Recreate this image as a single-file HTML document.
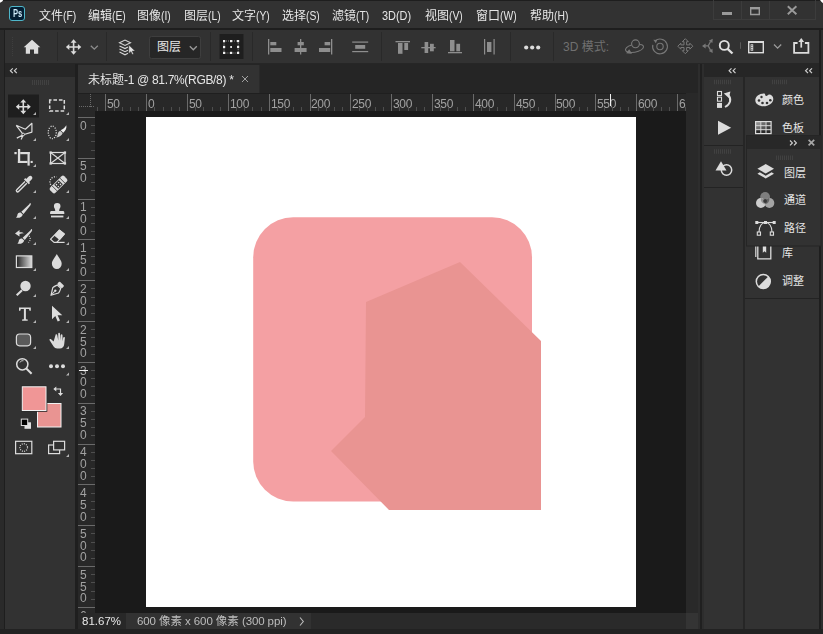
<!DOCTYPE html>
<html lang="zh"><head><meta charset="utf-8"><title>Photoshop</title>
<style>
*{box-sizing:border-box}
html,body{margin:0;padding:0}
body{width:823px;height:634px;position:relative;overflow:hidden;background:#262626;font-family:"Liberation Sans","Noto Sans CJK SC",sans-serif;font-size:12px;color:#e0e0e0}
.a{position:absolute}
.cjt{letter-spacing:0}
#menubar{left:0;top:0;width:823px;height:28px;background:#323232;border-top:1px solid #1e1e1e}
.mi{position:absolute;top:8.5px;height:14px;line-height:14px;font-size:12px;color:#e6e6e6;white-space:nowrap}
.ml{display:inline-block;transform:scaleX(.86);transform-origin:0 50%;font-size:12px}
.mi,.st,#tabtxt,.rl,.vl,.g{will-change:transform}
#optbar{left:5px;top:30px;width:814px;height:33px;background:#323232}
#toolhdr{left:5px;top:65px;width:70px;height:12px;background:#262626}
#tools{left:5px;top:77px;width:70px;height:552px;background:#323232}
#tabbar{left:78px;top:64px;width:620px;height:29px;background:#252525}
#tab{left:78px;top:65px;width:182px;height:28px;background:#323232;border-right:1px solid #2a2a2a}
#tabtxt{left:88px;top:72.5px;height:14px;line-height:14px;font-size:12px;color:#e6e6e6;white-space:nowrap;letter-spacing:-0.32px}
#hr{left:78px;top:93px;width:608px;height:18px;background:#282828;overflow:hidden;border-top:1px solid #1f1f1f}
#vr{left:78px;top:111px;width:17px;height:502px;background:#282828;overflow:hidden}
#rsb{left:686px;top:93px;width:12px;height:520px;background:#292929}
#paste{left:95px;top:111px;width:591px;height:502px;background:#1a1a1a}
#canvas{left:146px;top:117px;width:490px;height:490px;background:#fff}
.mt{position:absolute;top:-1px;width:1px;height:18px;background:#6a6a6a}
.nt{position:absolute;top:13px;width:1px;height:4px;background:#4e4e4e}
.rl{position:absolute;top:4px;font-weight:normal;font-size:12px;line-height:12px;color:#a2a2a2;letter-spacing:-0.3px}
.vmt{position:absolute;left:0;height:1px;width:17px;background:#6a6a6a}
.vnt{position:absolute;left:13px;height:1px;width:4px;background:#4e4e4e}
.vl{position:absolute;left:1.5px;font-weight:normal;font-size:12px;line-height:12px;color:#a2a2a2}
#status{left:78px;top:613px;width:608px;height:16px;background:#2a2a2a}
#info{left:126px;top:613px;width:185px;height:16px;background:#323232}
#corner{left:686px;top:613px;width:16px;height:16px;background:#343434}
#zoomf{left:78px;top:613px;width:48px;height:16px;background:#282828}
.st{position:absolute;top:614.2px;height:14px;line-height:14px;font-size:11.5px;white-space:nowrap}
#dock1h{left:704px;top:65px;width:39px;height:12px;background:#262626}
#dock2h{left:745px;top:65px;width:74px;height:12px;background:#262626}
#dock1{left:704px;top:77px;width:39px;height:552px;background:#323232}
#dock2{left:745px;top:77px;width:74px;height:552px;background:#323232}
.pl{position:absolute;font-size:11px;line-height:11px;height:11px;color:#e6e6e6;white-space:nowrap}
</style></head><body>
<div class="a" style="left:0;top:30px;width:5px;height:604px;background:#1e1e1e"></div>
<div class="a" style="left:0px;top:30px;width:4px;height:604px;background:#2a2a2a"></div>
<div class="a" style="left:819px;top:30px;width:4px;height:604px;background:#1e1e1e"></div>
<div class="a" style="left:821px;top:30px;width:2px;height:604px;background:#2e2e2e"></div>
<div class="a" style="left:0;top:629px;width:823px;height:5px;background:#222"></div>
<div id="menubar" class="a"></div>
<div class="a" style="left:0;top:28px;width:823px;height:2px;background:#1e1e1e"></div>
<span class="mi" style="left:39px">文件<span class="ml">(F)</span></span><span class="mi" style="left:88px">编辑<span class="ml">(E)</span></span><span class="mi" style="left:137px">图像<span class="ml">(I)</span></span><span class="mi" style="left:184px">图层<span class="ml">(L)</span></span><span class="mi" style="left:232px">文字<span class="ml">(Y)</span></span><span class="mi" style="left:282px">选择<span class="ml">(S)</span></span><span class="mi" style="left:332px">滤镜<span class="ml">(T)</span></span><span class="mi" style="left:382px"><span class="ml" style="transform:scaleX(.91)">3D(D)</span></span><span class="mi" style="left:425px">视图<span class="ml">(V)</span></span><span class="mi" style="left:476px">窗口<span class="ml">(W)</span></span><span class="mi" style="left:530px">帮助<span class="ml">(H)</span></span>
<div id="optbar" class="a"></div>
<div id="toolhdr" class="a"></div>
<div id="tools" class="a"></div>
<div id="tabbar" class="a"></div>
<div id="tab" class="a"></div>
<div id="tabtxt" class="a"><span class="cjt">未标题</span>-1 @ 81.7%(RGB/8) *</div>
<div class="a" style="left:75px;top:64px;width:3px;height:565px;background:#1f1f1f"></div>
<div id="hr" class="a"><i class="mt" style="left:27.4px"></i><b class="rl" style="left:29.2px">50</b><i class="mt" style="left:68.2px"></i><b class="rl" style="left:70.0px">0</b><i class="mt" style="left:109.0px"></i><b class="rl" style="left:110.8px">50</b><i class="mt" style="left:149.9px"></i><b class="rl" style="left:151.7px">100</b><i class="mt" style="left:190.7px"></i><b class="rl" style="left:192.5px">150</b><i class="mt" style="left:231.5px"></i><b class="rl" style="left:233.3px">200</b><i class="mt" style="left:272.4px"></i><b class="rl" style="left:274.2px">250</b><i class="mt" style="left:313.2px"></i><b class="rl" style="left:315.0px">300</b><i class="mt" style="left:354.0px"></i><b class="rl" style="left:355.8px">350</b><i class="mt" style="left:394.9px"></i><b class="rl" style="left:396.7px">400</b><i class="mt" style="left:435.7px"></i><b class="rl" style="left:437.5px">450</b><i class="mt" style="left:476.5px"></i><b class="rl" style="left:478.3px">500</b><i class="mt" style="left:517.4px"></i><b class="rl" style="left:519.2px">550</b><i class="mt" style="left:558.2px"></i><b class="rl" style="left:560.0px">600</b><i class="mt" style="left:599.0px"></i><b class="rl" style="left:600.8px">650</b><i class="nt" style="left:19.2px"></i><i class="nt" style="left:35.5px"></i><i class="nt" style="left:43.7px"></i><i class="nt" style="left:51.9px"></i><i class="nt" style="left:60.0px"></i><i class="nt" style="left:76.4px"></i><i class="nt" style="left:84.5px"></i><i class="nt" style="left:92.7px"></i><i class="nt" style="left:100.9px"></i><i class="nt" style="left:117.2px"></i><i class="nt" style="left:125.4px"></i><i class="nt" style="left:133.5px"></i><i class="nt" style="left:141.7px"></i><i class="nt" style="left:158.0px"></i><i class="nt" style="left:166.2px"></i><i class="nt" style="left:174.4px"></i><i class="nt" style="left:182.5px"></i><i class="nt" style="left:198.9px"></i><i class="nt" style="left:207.0px"></i><i class="nt" style="left:215.2px"></i><i class="nt" style="left:223.4px"></i><i class="nt" style="left:239.7px"></i><i class="nt" style="left:247.9px"></i><i class="nt" style="left:256.0px"></i><i class="nt" style="left:264.2px"></i><i class="nt" style="left:280.5px"></i><i class="nt" style="left:288.7px"></i><i class="nt" style="left:296.9px"></i><i class="nt" style="left:305.0px"></i><i class="nt" style="left:321.4px"></i><i class="nt" style="left:329.5px"></i><i class="nt" style="left:337.7px"></i><i class="nt" style="left:345.9px"></i><i class="nt" style="left:362.2px"></i><i class="nt" style="left:370.4px"></i><i class="nt" style="left:378.5px"></i><i class="nt" style="left:386.7px"></i><i class="nt" style="left:403.0px"></i><i class="nt" style="left:411.2px"></i><i class="nt" style="left:419.4px"></i><i class="nt" style="left:427.5px"></i><i class="nt" style="left:443.9px"></i><i class="nt" style="left:452.0px"></i><i class="nt" style="left:460.2px"></i><i class="nt" style="left:468.4px"></i><i class="nt" style="left:484.7px"></i><i class="nt" style="left:492.9px"></i><i class="nt" style="left:501.0px"></i><i class="nt" style="left:509.2px"></i><i class="nt" style="left:525.5px"></i><i class="nt" style="left:533.7px"></i><i class="nt" style="left:541.9px"></i><i class="nt" style="left:550.0px"></i><i class="nt" style="left:566.4px"></i><i class="nt" style="left:574.5px"></i><i class="nt" style="left:582.7px"></i><i class="nt" style="left:590.9px"></i><i class="nt" style="left:607.2px"></i></div>
<div id="rsb" class="a"></div>
<div id="paste" class="a"></div>
<div id="vr" class="a"><i class="vmt" style="top:5.8px"></i><b class="vl" style="top:8.5px">0</b><i class="vmt" style="top:46.6px"></i><b class="vl" style="top:49.3px">5</b><b class="vl" style="top:61.1px">0</b><i class="vmt" style="top:87.5px"></i><b class="vl" style="top:90.2px">1</b><b class="vl" style="top:102.0px">0</b><b class="vl" style="top:113.8px">0</b><i class="vmt" style="top:128.3px"></i><b class="vl" style="top:131.0px">1</b><b class="vl" style="top:142.8px">5</b><b class="vl" style="top:154.6px">0</b><i class="vmt" style="top:169.1px"></i><b class="vl" style="top:171.8px">2</b><b class="vl" style="top:183.6px">0</b><b class="vl" style="top:195.4px">0</b><i class="vmt" style="top:210.0px"></i><b class="vl" style="top:212.7px">2</b><b class="vl" style="top:224.5px">5</b><b class="vl" style="top:236.3px">0</b><i class="vmt" style="top:250.8px"></i><b class="vl" style="top:253.5px">3</b><b class="vl" style="top:265.3px">0</b><b class="vl" style="top:277.1px">0</b><i class="vmt" style="top:291.6px"></i><b class="vl" style="top:294.3px">3</b><b class="vl" style="top:306.1px">5</b><b class="vl" style="top:317.9px">0</b><i class="vmt" style="top:332.5px"></i><b class="vl" style="top:335.2px">4</b><b class="vl" style="top:347.0px">0</b><b class="vl" style="top:358.8px">0</b><i class="vmt" style="top:373.3px"></i><b class="vl" style="top:376.0px">4</b><b class="vl" style="top:387.8px">5</b><b class="vl" style="top:399.6px">0</b><i class="vmt" style="top:414.1px"></i><b class="vl" style="top:416.8px">5</b><b class="vl" style="top:428.6px">0</b><b class="vl" style="top:440.4px">0</b><i class="vmt" style="top:455.0px"></i><b class="vl" style="top:457.7px">5</b><b class="vl" style="top:469.5px">5</b><b class="vl" style="top:481.3px">0</b><i class="vmt" style="top:495.8px"></i><b class="vl" style="top:498.5px">6</b><i class="vnt" style="top:14.0px"></i><i class="vnt" style="top:22.1px"></i><i class="vnt" style="top:30.3px"></i><i class="vnt" style="top:38.5px"></i><i class="vnt" style="top:54.8px"></i><i class="vnt" style="top:63.0px"></i><i class="vnt" style="top:71.1px"></i><i class="vnt" style="top:79.3px"></i><i class="vnt" style="top:95.6px"></i><i class="vnt" style="top:103.8px"></i><i class="vnt" style="top:112.0px"></i><i class="vnt" style="top:120.1px"></i><i class="vnt" style="top:136.5px"></i><i class="vnt" style="top:144.6px"></i><i class="vnt" style="top:152.8px"></i><i class="vnt" style="top:161.0px"></i><i class="vnt" style="top:177.3px"></i><i class="vnt" style="top:185.5px"></i><i class="vnt" style="top:193.6px"></i><i class="vnt" style="top:201.8px"></i><i class="vnt" style="top:218.1px"></i><i class="vnt" style="top:226.3px"></i><i class="vnt" style="top:234.5px"></i><i class="vnt" style="top:242.6px"></i><i class="vnt" style="top:259.0px"></i><i class="vnt" style="top:267.1px"></i><i class="vnt" style="top:275.3px"></i><i class="vnt" style="top:283.5px"></i><i class="vnt" style="top:299.8px"></i><i class="vnt" style="top:308.0px"></i><i class="vnt" style="top:316.1px"></i><i class="vnt" style="top:324.3px"></i><i class="vnt" style="top:340.6px"></i><i class="vnt" style="top:348.8px"></i><i class="vnt" style="top:357.0px"></i><i class="vnt" style="top:365.1px"></i><i class="vnt" style="top:381.5px"></i><i class="vnt" style="top:389.6px"></i><i class="vnt" style="top:397.8px"></i><i class="vnt" style="top:406.0px"></i><i class="vnt" style="top:422.3px"></i><i class="vnt" style="top:430.5px"></i><i class="vnt" style="top:438.6px"></i><i class="vnt" style="top:446.8px"></i><i class="vnt" style="top:463.1px"></i><i class="vnt" style="top:471.3px"></i><i class="vnt" style="top:479.5px"></i><i class="vnt" style="top:487.6px"></i></div>
<div id="canvas" class="a">
<svg width="490" height="490" viewBox="146 117 490 490" style="display:block">
<rect x="253.2" y="217.3" width="278.8" height="284.2" rx="40" ry="40" fill="#f4a0a3"/>
<polygon points="460,262 541,341 541,510 389,510 331,451 365,417 366,302" fill="#e99492"/>
</svg></div>
<div id="status" class="a"></div><div id="info" class="a"></div><div id="corner" class="a"></div>
<div id="zoomf" class="a"></div>
<span class="st" style="left:81.5px;color:#e8e8e8">81.67%</span>
<span class="st" style="left:136.5px;color:#bdbdbd;letter-spacing:-0.1px">600 <span class="cjt">像素</span> x 600 <span class="cjt">像素</span> (300 ppi)</span>
<div id="dock1h" class="a"></div><div id="dock2h" class="a"></div>
<div id="dock1" class="a"></div><div id="dock2" class="a"></div>
<span class="pl" style="left:782px;top:94.6px">颜色</span>
<span class="pl" style="left:782px;top:122.5px">色板</span>
<span class="pl" style="left:782px;top:248.1px">库</span>
<span class="pl" style="left:782px;top:275.7px">调整</span>
<!-- window controls -->
<div class="a" style="left:713px;top:0;width:103px;height:20px;border:1px solid #3c3c3c;border-top:none"></div>
<div class="a" style="left:741px;top:1px;width:1px;height:18px;background:#3c3c3c"></div>
<div class="a" style="left:769px;top:1px;width:1px;height:18px;background:#3c3c3c"></div>
<svg class="a" style="left:713px;top:0" width="103" height="20" viewBox="713 0 103 20">
<rect x="722" y="12" width="10" height="3" fill="#9a9a9a"/>
<path d="M750.7 8.5h8.6v6h-8.6z" fill="none" stroke="#9a9a9a" stroke-width="1.4"/><rect x="750" y="7" width="10" height="2.2" fill="#9a9a9a"/>
<path d="M787.8 6.3l8.6 8M796.4 6.3l-8.6 8" stroke="#9a9a9a" stroke-width="1.9" fill="none"/>
</svg>
<!-- options bar -->
<svg class="a" style="left:5px;top:30px" width="814" height="33" viewBox="5 30 814 33">
<g fill="none" stroke="#292929" stroke-width="1">
<path d="M57.5 32v29M106.5 32v29M210.5 32v29M252.5 32v29M381.5 32v29M510.5 32v29M553.5 32v29"/>
</g>
<path d="M12.5 37v20" stroke="#3e3e3e" stroke-width="1" stroke-dasharray="1 1"/>
<!-- home -->
<path d="M32 39.8l8.3 7.4h-2.1v6.6h-4.2v-4.3h-4v4.3h-4.2v-6.6h-2.1z" fill="#dcdcdc"/>
<!-- move -->
<g fill="#dcdcdc"><path d="M73.6 39.3l3 3.4h-2.2v3.5h3.5v-2.2l3.4 3-3.4 3v-2.2h-3.5v3.5h2.2l-3 3.4-3-3.4h2.2v-3.5h-3.5v2.2l-3.4-3 3.4-3v2.2h3.5v-3.5h-2.2z"/></g>
<path d="M90.8 45.7l3.5 3.5 3.5-3.5" fill="none" stroke="#8c8c8c" stroke-width="1.3"/>
<!-- auto-select layers -->
<g fill="none" stroke="#d4d4d4" stroke-width="1.100"><path d="M119.500 42.800l5.500-2.700 5.500 2.700-5.500 2.700z"/><path d="M119.500 45.900l5.500 2.700 3-1.500M119.500 49l5.500 2.700 3-1.500M119.500 52.100l5.500 2.700 3-1.500"/></g>
<path d="M128.800 45v8.600l2.100-1.900 1.400 2.900 1.300-.6-1.400-2.900h2.900z" fill="#e2e2e2" stroke="#323232" stroke-width=".5"/>
<!-- dropdown -->
<rect x="149.500" y="36.500" width="51" height="22" rx="2" fill="#262626" stroke="#3e3e3e"/>
<path d="M189.800 46.300l3.500 3.500 3.500-3.500" fill="none" stroke="#9a9a9a" stroke-width="1.3"/>
<!-- transform controls toggle -->
<rect x="219.500" y="34" width="24" height="25" fill="#1e1e1e"/>
<rect x="224" y="41" width="14.200" height="12" fill="none" stroke="#9a9a9a" stroke-width=".9" stroke-dasharray="1 1"/>
<g fill="#f0f0f0"><rect x="223" y="40" width="2.200" height="2.200"/><rect x="230" y="40" width="2.200" height="2.200"/><rect x="237" y="40" width="2.200" height="2.200"/><rect x="223" y="45.900" width="2.200" height="2.200"/><rect x="237" y="45.900" width="2.200" height="2.200"/><rect x="223" y="51.800" width="2.200" height="2.200"/><rect x="230" y="51.800" width="2.200" height="2.200"/><rect x="237" y="51.800" width="2.200" height="2.200"/><rect x="230.200" y="46.100" width="1.800" height="1.800"/></g>
<!-- align icons -->
<g fill="#8e8e8e">
<rect x="268" y="39" width="1.300" height="15.500"/><rect x="270.300" y="42" width="6" height="3.300"/><rect x="270.300" y="48" width="11.200" height="4"/>
<rect x="300" y="39" width="1.300" height="15.500"/><rect x="297.600" y="42" width="6.200" height="3.300"/><rect x="294.600" y="48" width="12" height="4"/>
<rect x="331" y="39" width="1.300" height="15.500"/><rect x="324.600" y="42" width="5.600" height="3.300"/><rect x="319" y="48" width="11.200" height="4"/>
<rect x="352.200" y="41.500" width="16" height="1.200"/><rect x="352.200" y="51" width="16" height="1.200"/><rect x="355.200" y="45" width="10" height="3.800"/>
<rect x="395.500" y="41" width="14.500" height="1.300"/><rect x="398" y="43" width="4.500" height="10.800"/><rect x="404.300" y="43" width="3.800" height="7"/>
<rect x="421.300" y="47" width="14.300" height="1.300"/><rect x="424.600" y="42" width="3.600" height="11"/><rect x="430" y="43.800" width="3.800" height="7.500"/>
<rect x="448" y="52" width="14" height="1.300"/><rect x="450" y="40" width="4.500" height="11.300"/><rect x="456.300" y="43.800" width="3.800" height="7.500"/>
<rect x="484" y="39" width="1.200" height="15.500"/><rect x="493.500" y="39" width="1.200" height="15.500"/><rect x="487" y="42" width="4.400" height="10"/>
</g>
<g fill="#dcdcdc"><circle cx="526.200" cy="47.500" r="2.100"/><circle cx="532.200" cy="47.500" r="2.100"/><circle cx="538.200" cy="47.500" r="2.100"/></g>
<!-- 3D icons -->
<g fill="none" stroke="#787878" stroke-width="1.100">
<circle cx="635.500" cy="43.800" r="3.900"/><path d="M631.600 45c-4.600 1.300-7 3.800-5.800 5.700 1.400 2.200 7.600 2.300 12.600.500 4.200-1.500 6-3.900 4.700-5.500-.600-.800-1.900-1.200-3.500-1.200"/><path d="M629.200 50.200l-2 2.700 3.800.300z" fill="#787878"/>
<circle cx="660" cy="46.500" r="3.200"/><path d="M655 41a7.400 7.400 0 1 1-2.200 3.800"/><path d="M653.300 39.800l3.800.200-1.200 3.300z" fill="#787878" stroke="none"/>
<path d="M685.300 38.700l3 3h-1.700v3.200h3.200v-1.700l3 3-3 3v-1.700h-3.200v3.200h1.700l-3 3-3-3h1.700v-3.200h-3.200v1.700l-3-3 3-3v1.700h3.200v-3.200h-1.700z" stroke-width="1"/>
<path d="M708.200 45.900h-3M708.200 45.900l2.400-4.400M708.200 45.900l2.400 4.400" stroke-width="1.300"/>
<g fill="#787878" stroke="none"><path d="M702 45.900l3.600-2.500v5z"/><path d="M712.700 38.700l-.300 4.300-3.600-2.200z"/><path d="M712.700 53.100l-.300-4.300-3.600 2.200z"/></g>
</g>
<!-- search -->
<circle cx="724.300" cy="45.400" r="4.500" fill="none" stroke="#e0e0e0" stroke-width="1.900"/><path d="M727.600 48.800l4.900 4.700" stroke="#e0e0e0" stroke-width="2.300"/>
<path d="M740.500 42.300v6.500" stroke="#5a5a5a"/>
<!-- workspace -->
<rect x="748.700" y="41.900" width="14.600" height="10.800" fill="none" stroke="#dcdcdc" stroke-width="1.400"/><rect x="748" y="41" width="16" height="2" fill="#dcdcdc"/><rect x="750.600" y="44.300" width="2.600" height="6.400" fill="#dcdcdc"/><g fill="#323232"><rect x="751.400" y="45.200" width="1" height="1"/><rect x="751.400" y="47" width="1" height="1"/><rect x="751.400" y="48.800" width="1" height="1"/></g>
<path d="M774 44.500l3.600 3.600 3.600-3.600" fill="none" stroke="#9a9a9a" stroke-width="1.300"/>
<!-- share -->
<path d="M797.600 43h-3.500v9.800h14.300v-9.800h-3.500" fill="none" stroke="#dcdcdc" stroke-width="1.800"/><path d="M801.250 47.600v-7.500" stroke="#dcdcdc" stroke-width="1.700"/><path d="M798.300 42l2.950-3.900 2.950 3.900z" fill="#dcdcdc"/>
</svg>
<span class="a" style="left:157px;top:40px;font-size:12px;line-height:14px;height:14px;color:#e6e6e6;white-space:nowrap">图层</span>
<span class="a" style="left:563px;top:40px;font-size:12px;line-height:14px;height:14px;color:#707070;white-space:nowrap">3D 模式:</span>
<!-- dock separators / details -->
<div class="a" style="left:698px;top:64px;width:6px;height:565px;background:#2d2d2d"></div>
<div class="a" style="left:700px;top:64px;width:2px;height:565px;background:#202020"></div>
<div class="a" style="left:704px;top:145px;width:39px;height:1px;background:#232323"></div>
<div class="a" style="left:704px;top:187px;width:39px;height:1px;background:#232323"></div>
<div class="a" style="left:745px;top:298px;width:74px;height:1px;background:#232323"></div>
<svg class="a" style="left:704px;top:65px" width="119" height="240" viewBox="704 65 119 240">
<!-- collapse chevrons -->
<g fill="none" stroke="#d0d0d0" stroke-width="1.200"><path d="M731.500 68.300l-2.400 2.400 2.400 2.400M735.500 68.300l-2.400 2.400 2.400 2.400M808 68.300l-2.400 2.400 2.400 2.400M812 68.300l-2.400 2.400 2.400 2.400"/></g>
<!-- grips -->
<path d="M714 82h18M714 151.500h18M772 82h16" stroke="#414141" stroke-width="4.500" stroke-dasharray="1 1" fill="none"/>
<!-- history -->
<g fill="none" stroke="#dcdcdc" stroke-width="1.100"><rect x="717.500" y="91.500" width="4" height="4"/><rect x="717.500" y="97.200" width="4" height="4"/></g>
<rect x="717" y="102.900" width="5" height="5" fill="#dcdcdc"/>
<path d="M725 107c5.400-2.600 7-8 3.200-12" fill="none" stroke="#dcdcdc" stroke-width="1.900"/><path d="M723.800 93.400l6.600-1.900-1.500 6.500z" fill="#dcdcdc"/>
<!-- play -->
<path d="M718 120.700l13.200 7-13.200 7z" fill="#dcdcdc"/>
<!-- shapes icon -->
<circle cx="726.500" cy="170" r="5.200" fill="none" stroke="#dcdcdc" stroke-width="1.500"/><path d="M715.500 170.500l5.500-9.300 5.500 9.300z" fill="#dcdcdc"/>
<!-- palette -->
<path d="M764.500 93.400c-5.300 0-9.200 3-9.200 6.800 0 3.500 3.600 6 8.300 6 4.600 0 9.700-3 9.700-7.300 0-2.600-2.200-4.400-4-4.400-1.700 0-1.600 1.600-3 1.600-1.300 0-1-2.700-1.800-2.700z" fill="#dcdcdc"/>
<g fill="#323232"><circle cx="759" cy="100.500" r="1.300"/><circle cx="762.500" cy="103" r="1.300"/><circle cx="767" cy="103" r="1.300"/><circle cx="770.300" cy="100.300" r="1.300"/><circle cx="761.500" cy="97" r="1.200"/></g>
<!-- swatches -->
<g><rect x="756" y="122" width="4.600" height="3.500" fill="#8c8c8c"/><rect x="761" y="122" width="4.600" height="3.500" fill="#6c6c6c"/><rect x="766.200" y="122" width="4.600" height="3.500" fill="#4c4c4c"/><rect x="756" y="126" width="4.600" height="3.500" fill="#707070"/><rect x="761" y="126" width="4.600" height="3.500" fill="#585858"/><rect x="766.200" y="126" width="4.600" height="3.500" fill="#3e3e3e"/><rect x="756" y="130" width="15" height="3.500" fill="#2a2a2a"/></g>
<rect x="755.600" y="121.600" width="15.500" height="12" fill="none" stroke="#dcdcdc" stroke-width="1.200"/><path d="M760.800 121.600v12M766 121.600v12M755.600 125.700h15.500M755.600 129.700h15.500" stroke="#dcdcdc" stroke-width="1" fill="none"/>
<!-- library (partially hidden) -->
<path d="M757.800 246v12.800h13v-12.800" fill="none" stroke="#dcdcdc" stroke-width="1.300"/><path d="M755.800 246v11" stroke="#dcdcdc" stroke-width="1.200"/>
<path d="M762.800 246v6.800l1.700-1.500 1.700 1.500v-6.800z" fill="#dcdcdc"/>
<!-- adjustments -->
<circle cx="763.300" cy="281.500" r="7" fill="none" stroke="#dcdcdc" stroke-width="1.500"/><path d="M758.300 286.500a7 7 0 0 0 10-10z" fill="#dcdcdc"/>
<!-- floating panel -->
<rect x="746.500" y="135.500" width="74.500" height="110.500" fill="#323232" stroke="#252525" stroke-width="1"/>
<rect x="747" y="136" width="73.500" height="13" fill="#282828"/>
<g fill="none" stroke="#d0d0d0" stroke-width="1.200"><path d="M790 140.500l2.400 2.400-2.400 2.400M794 140.500l2.400 2.400-2.400 2.400"/></g>
<path d="M808.600 139.800l5.600 5.600M814.200 139.800l-5.600 5.600" stroke="#a6a6a6" stroke-width="1.700"/>
<path d="M776 157.800h18" stroke="#414141" stroke-width="4.500" stroke-dasharray="1 1" fill="none"/>
<!-- layers -->
<path d="M765.700 164l8.300 4.800-8.300 4.800-8.300-4.800z" fill="#dcdcdc"/><path d="M759.800 172.300l-2.400 1.400 8.300 4.800 8.300-4.800-2.400-1.400-5.900 3.400z" fill="#dcdcdc"/>
<!-- channels -->
<circle cx="765.100" cy="197" r="4.900" fill="#7e7e7e"/><circle cx="760.900" cy="203" r="4.900" fill="#cdcdcd"/><circle cx="769.400" cy="203" r="4.900" fill="#a4a4a4"/>
<path d="M765.100 201.900a4.900 4.900 0 0 0-4.200-3.800 4.900 4.900 0 0 0 4.200 6z" fill="#8e8e8e" opacity=".9"/><path d="M765.100 201.900a4.900 4.900 0 0 1 4.200-3.800 4.900 4.900 0 0 1-4.200 6z" fill="#5e5e5e" opacity=".9"/>
<circle cx="765.100" cy="201" r="1.900" fill="#383838"/>
<!-- paths -->
<g fill="none" stroke="#dcdcdc" stroke-width="1.100"><path d="M759 232c0-6 3-9.500 6.500-9.500s6.500 3.500 6.500 9.500"/><path d="M757 222.500h17"/><rect x="757.300" y="232" width="3.200" height="3.200"/><rect x="770.300" y="232" width="3.200" height="3.200"/></g>
<g fill="#dcdcdc"><rect x="755.300" y="221" width="3" height="3"/><rect x="764" y="221" width="3" height="3"/><rect x="772.700" y="221" width="3" height="3"/></g>
</svg>
<span class="pl" style="left:784px;top:167.9px">图层</span>
<span class="pl" style="left:784px;top:195.4px">通道</span>
<span class="pl" style="left:784px;top:223.2px">路径</span>
<svg class="a" style="left:5px;top:65px" width="70" height="400" viewBox="5 65 70 400">
<g fill="none" stroke="#d0d0d0" stroke-width="1.200"><path d="M12.800 68.300l-2.400 2.400 2.400 2.400M16.800 68.300l-2.400 2.400 2.400 2.400"/></g>
<path d="M32 82.500h18" stroke="#414141" stroke-width="5" stroke-dasharray="1 1" fill="none"/>
<rect x="8" y="94.500" width="31" height="23" fill="#1e1e1e"/>
<!-- flyout triangles -->
<g fill="#b4b4b4">
<path d="M36 112v3h-3zM69 112v3h-3zM36 138v3h-3zM69 138v3h-3zM36 164v3h-3zM36 190v3h-3zM69 190v3h-3zM36 216v3h-3zM69 216v3h-3zM36 242v3h-3zM69 242v3h-3zM36 268v3h-3zM69 268v3h-3zM36 294v3h-3zM69 294v3h-3zM36 320v3h-3zM69 320v3h-3zM36 346v3h-3zM69 346v3h-3zM69 372.500v3h-3zM69 454v3h-3z"/>
</g>
<g fill="#dcdcdc" stroke="none">
<!-- move -->
<path d="M23.300 99.200l3 3.400h-2.200v3.300h3.300v-2.200l3.400 3-3.400 3v-2.200h-3.300v3.300h2.200l-3 3.400-3-3.400h2.200v-3.300h-3.300v2.200l-3.400-3 3.400-3v2.200h3.300v-3.300h-2.200z"/>
</g>
<!-- marquee -->
<rect x="49.700" y="100" width="14.600" height="11" fill="none" stroke="#dcdcdc" stroke-width="1.500" stroke-dasharray="3.600 1.900" stroke-dashoffset="1.800"/>
<!-- polygonal lasso -->
<path d="M16.200 125.300l9.200 3.900 6.500-5.900v8.800l-8.600 2.600-6.500 3.400M16.200 125.300l7.100 9.400-2.200 4.700" fill="none" stroke="#dcdcdc" stroke-width="1.200" stroke-linejoin="round"/>
<circle cx="23.200" cy="134.500" r="1.300" fill="#323232" stroke="#dcdcdc" stroke-width="1"/>
<!-- quick selection -->
<ellipse cx="52.300" cy="132.400" rx="4" ry="6.300" fill="none" stroke="#dcdcdc" stroke-width="1.300" stroke-dasharray="1.100 1.350"/>
<path d="M66.300 125.300c.6 2.600-.6 5.400-3 7.400l-2.600-2.400c2.400-1.200 4.400-2.800 5.600-5z" fill="#f0f0f0"/>
<path d="M60.200 130.800l2.500 2.300c-.9 2.500-3.200 4.300-6.600 4.500 1.400-1 1.400-2.500 1.800-4 .4-1.500 1.200-2.400 2.300-2.800z" fill="#c8c8c8"/>
<!-- crop -->
<g fill="#dcdcdc"><rect x="14.400" y="152" width="2.300" height="2.200"/><rect x="17.900" y="149" width="2.300" height="14"/><rect x="20.200" y="152" width="9.500" height="2.200"/><rect x="27.500" y="152" width="2.200" height="13.600"/><rect x="17.900" y="160.900" width="9.600" height="2.100"/><rect x="30.600" y="160.900" width="2.100" height="2.100"/></g>
<!-- frame -->
<rect x="50.600" y="152.500" width="14.400" height="11" fill="none" stroke="#dcdcdc" stroke-width="1.200"/><path d="M50.600 152.500l14.400 11M65 152.500l-14.400 11" stroke="#dcdcdc" stroke-width="1.100"/>
<g fill="#dcdcdc"><rect x="49.500" y="151.400" width="2.300" height="2.300"/><rect x="63.800" y="151.400" width="2.300" height="2.300"/><rect x="49.500" y="162.300" width="2.300" height="2.300"/><rect x="63.800" y="162.300" width="2.300" height="2.300"/></g>
<!-- eyedropper -->
<path d="M25 181.500l-8 8c-.800.800-.800 1.600-.300 2.100s1.300.500 2.100-.300l8-8" fill="none" stroke="#dcdcdc" stroke-width="1.400"/>
<path d="M24 179.500l4.800 4.800 1.300-1.300-1-1 2.500-2.500c1-1 1-2.300.200-3.100s-2.100-.800-3.100.200l-2.500 2.500-1-1z" fill="#dcdcdc"/>
<!-- healing -->
<path d="M52.500 186.500a5.200 5.200 0 0 1 4-9.500" fill="none" stroke="#dcdcdc" stroke-width="1.300" stroke-dasharray="1.100 1.300"/>
<g transform="rotate(-45 58.500 184.500)"><rect x="48.500" y="180.800" width="20" height="7.400" rx="2" fill="#dcdcdc"/><rect x="55.300" y="181.600" width="6.400" height="5.800" fill="#323232"/><g fill="#dcdcdc"><circle cx="57" cy="183.200" r=".800"/><circle cx="60" cy="183.200" r=".800"/><circle cx="57" cy="185.800" r=".800"/><circle cx="60" cy="185.800" r=".800"/></g><path d="M53 181v7M64 181v7" stroke="#323232" stroke-width=".800"/></g>
<!-- brush -->
<path d="M30.500 203.200c.600.600.400 1.400-.200 2.200l-6.800 8.500-2.200-2.200 8-7.500c.400-.600.800-1.400 1.200-1z" fill="#dcdcdc"/>
<path d="M20.600 212.500c-1.800-.300-3.200 1-3.300 2.700 0 1-.700 1.900-1.500 2.300 2.800.900 6.200 0 7-3z" fill="#dcdcdc"/>
<!-- stamp -->
<path d="M57.200 203a3.300 3.300 0 0 1 3.300 3.300c0 1.700-1.300 2.600-1.300 4v.7h3.700c.800 0 1.400.600 1.400 1.400v1.600h-14.200v-1.600c0-.800.600-1.400 1.400-1.400h3.700v-.7c0-1.400-1.300-2.300-1.300-4a3.300 3.300 0 0 1 3.300-3.300z" fill="#dcdcdc"/><rect x="51" y="215.600" width="12.400" height="1.800" fill="#dcdcdc"/>
<!-- history brush -->
<path d="M31.800 229.200c.600.600.400 1.400-.200 2.200l-6.800 8.500-2.200-2.200 8-7.500c.400-.600.800-1.400 1.200-1z" fill="#dcdcdc"/>
<path d="M22 238.500c-1.800-.300-3.200 1-3.300 2.700 0 1-.700 1.900-1.500 2.300 2.800.900 6.200 0 7-3z" fill="#dcdcdc"/>
<path d="M15 233.500l4.500-3.500v2.200c2-.100 3.600.2 5 1.200-1.500-.300-3-.100-5 .600v2.500z" fill="#dcdcdc"/>
<path d="M29 236c1.800 1.800 1.500 4.500-.500 6.500" fill="none" stroke="#dcdcdc" stroke-width="1.100" stroke-dasharray="1 1.200"/>
<!-- eraser -->
<path d="M59.400 230.100l4.800 3.900-7.300 8.400h-2.900l-3.400-3.200z" fill="none" stroke="#dcdcdc" stroke-width="1.200" stroke-linejoin="round"/>
<path d="M59.400 230.100l4.800 3.900-4.600 5.300-4.800-3.900z" fill="#dcdcdc" stroke="#dcdcdc" stroke-width="1.200" stroke-linejoin="round"/>
<path d="M56 242.400h8.600" stroke="#dcdcdc" stroke-width="1.200"/>
<!-- gradient -->
<defs><linearGradient id="gr" x1="0" x2="1"><stop offset="0" stop-color="#222"/><stop offset="1" stop-color="#ddd"/></linearGradient></defs>
<rect x="16.400" y="255.900" width="15.400" height="11.600" fill="url(#gr)" stroke="#dcdcdc" stroke-width="1.200"/>
<!-- blur -->
<path d="M56.800 254c1.800 3.600 4.900 6.400 4.900 9.800a4.900 5.200 0 0 1-9.800 0c0-3.400 3.100-6.200 4.900-9.800z" fill="#dcdcdc"/>
<!-- dodge -->
<circle cx="25.500" cy="286" r="5.200" fill="#dcdcdc"/><path d="M22 290.200l-5.300 5" stroke="#dcdcdc" stroke-width="2.100"/>
<!-- pen -->
<g transform="translate(51 295.300) rotate(43)"><path d="M0 0l-3.900-6.800c0-2.400 1.200-3.800 1.500-5h4.800c.3 1.200 1.500 2.600 1.500 5z" fill="none" stroke="#dcdcdc" stroke-width="1.200" stroke-linejoin="round"/><path d="M0-.5v-5" stroke="#dcdcdc" stroke-width="1"/><circle cx="0" cy="-6.300" r="1.200" fill="#dcdcdc"/><rect x="-3.300" y="-16" width="6.600" height="3.600" rx="1" fill="#dcdcdc"/></g>
<!-- type -->
<path d="M19 307.400h11.800v3.300h-1.300l-.5-1.700h-3.100v10.200l1.800.4v1.100h-5.600v-1.100l1.800-.4v-10.200h-3.100l-.5 1.700h-1.300z" fill="#dcdcdc"/>
<!-- path select arrow -->
<path d="M52 305.700v13.500l3.300-3.100 2.400 5.400 2.300-1-2.400-5.300h4.700z" fill="#dcdcdc"/>
<!-- rounded rect -->
<rect x="16.400" y="334" width="14.200" height="11.800" rx="3.200" fill="#5a5a5a" stroke="#dcdcdc" stroke-width="1.200"/>
<!-- hand -->
<path d="M53.600 341.500l-2.800-2.400c-.7-.6-1.800.3-1.200 1.200l4 6.200c.9 1.300 2 1.900 3.600 1.900h2.600c2.600 0 4.200-1.700 4.400-4.200l.7-6.200c.1-1.100-1.500-1.300-1.700-.2l-.6 3.400-.1-6c0-1.200-1.700-1.200-1.800 0l-.2 5.200-.5-6.700c-.1-1.200-1.800-1.100-1.800.1l.1 6.700-1.100-5.600c-.2-1.100-1.900-.8-1.700.4z" fill="#dcdcdc"/>
<!-- zoom -->
<circle cx="22.300" cy="364.300" r="5.600" fill="none" stroke="#dcdcdc" stroke-width="1.500"/><path d="M26.300 368.500l5.300 5.300" stroke="#dcdcdc" stroke-width="2"/><path d="M20 362.500a3 3 0 0 1 3.500-1.800" fill="none" stroke="#dcdcdc" stroke-width=".900"/>
<!-- dots -->
<g fill="#dcdcdc"><circle cx="51" cy="366.200" r="2"/><circle cx="57" cy="366.200" r="2"/><circle cx="63" cy="366.200" r="2"/></g>
<!-- colors -->
<rect x="37.500" y="403.500" width="23.500" height="23.500" fill="#e99492" stroke="#f2f2f2" stroke-width="1"/>
<rect x="22.300" y="386.800" width="23.700" height="23.700" fill="#f09696" stroke="#2a2a2a" stroke-width="2.600"/>
<rect x="22.300" y="386.800" width="23.700" height="23.700" fill="#f09696" stroke="#f2f2f2" stroke-width="1"/>
<path d="M55 389h5.500v5" fill="none" stroke="#dcdcdc" stroke-width="1.200"/><path d="M53.300 389l3-2.600v5.200zM60.500 396l-2.600-3h5.200z" fill="#dcdcdc"/>
<rect x="24.500" y="422.300" width="6.500" height="6.500" fill="#e0e0e0"/><rect x="21.300" y="419.100" width="6.400" height="6.400" fill="#000" stroke="#dcdcdc" stroke-width="1"/>
<!-- quick mask -->
<rect x="15.600" y="441.300" width="16.200" height="12.400" fill="none" stroke="#dcdcdc" stroke-width="1.200"/><circle cx="23.700" cy="447.500" r="3.800" fill="none" stroke="#dcdcdc" stroke-width="1.200" stroke-dasharray="1 1.200"/>
<!-- screen mode -->
<rect x="48.600" y="445" width="11" height="8.600" fill="#323232" stroke="#dcdcdc" stroke-width="1.200"/><rect x="53.600" y="441.300" width="11" height="8.600" fill="#323232" stroke="#dcdcdc" stroke-width="1.200"/>
</svg>
<!-- Ps logo -->
<div class="a" style="left:9px;top:6px;width:16px;height:15px;border:1px solid #4fb6c9;border-radius:3px;background:#041e33"></div>
<span class="a g" style="left:12.700px;top:6.700px;font-size:10px;line-height:13px;font-weight:bold;color:#d6f1ff;transform:scaleX(.75);transform-origin:0 0">Ps</span>
<!-- tab close -->
<svg class="a" style="left:240px;top:74px" width="10" height="10" viewBox="0 0 10 10"><path d="M2 2l6 6M8 2l-6 6" stroke="#a0a0a0" stroke-width="1"/></svg>
<!-- ruler origin box -->
<svg class="a" style="left:78px;top:93px" width="17" height="18" viewBox="0 0 17 18"><path d="M12.500 1v14M1 13.500h15" stroke="#6a6a6a" stroke-width="1" stroke-dasharray="1 1" fill="none"/></svg>
<!-- cursor markers -->
<div class="a" style="left:610px;top:94px;width:1px;height:12px;background:#f0f0f0"></div>
<div class="a" style="left:79px;top:370px;width:9px;height:1px;background:#f0f0f0"></div>
<!-- status arrow -->
<svg class="a" style="left:297px;top:616px" width="10" height="11" viewBox="0 0 10 11"><path d="M3 1.500l3.300 4-3.300 4" fill="none" stroke="#bdbdbd" stroke-width="1.100"/></svg>
<!-- window corner artifacts -->
<svg class="a" style="left:0;top:0" width="4" height="4" viewBox="0 0 4 4"><path d="M0 0h3.200l-1 1.600-2.200 1.200z" fill="#fff"/></svg>
<svg class="a" style="left:819px;top:0" width="4" height="4" viewBox="0 0 4 4"><path d="M4 0h-3l1.200 1.400 1.800 1.800z" fill="#fff"/></svg>

</body></html>
